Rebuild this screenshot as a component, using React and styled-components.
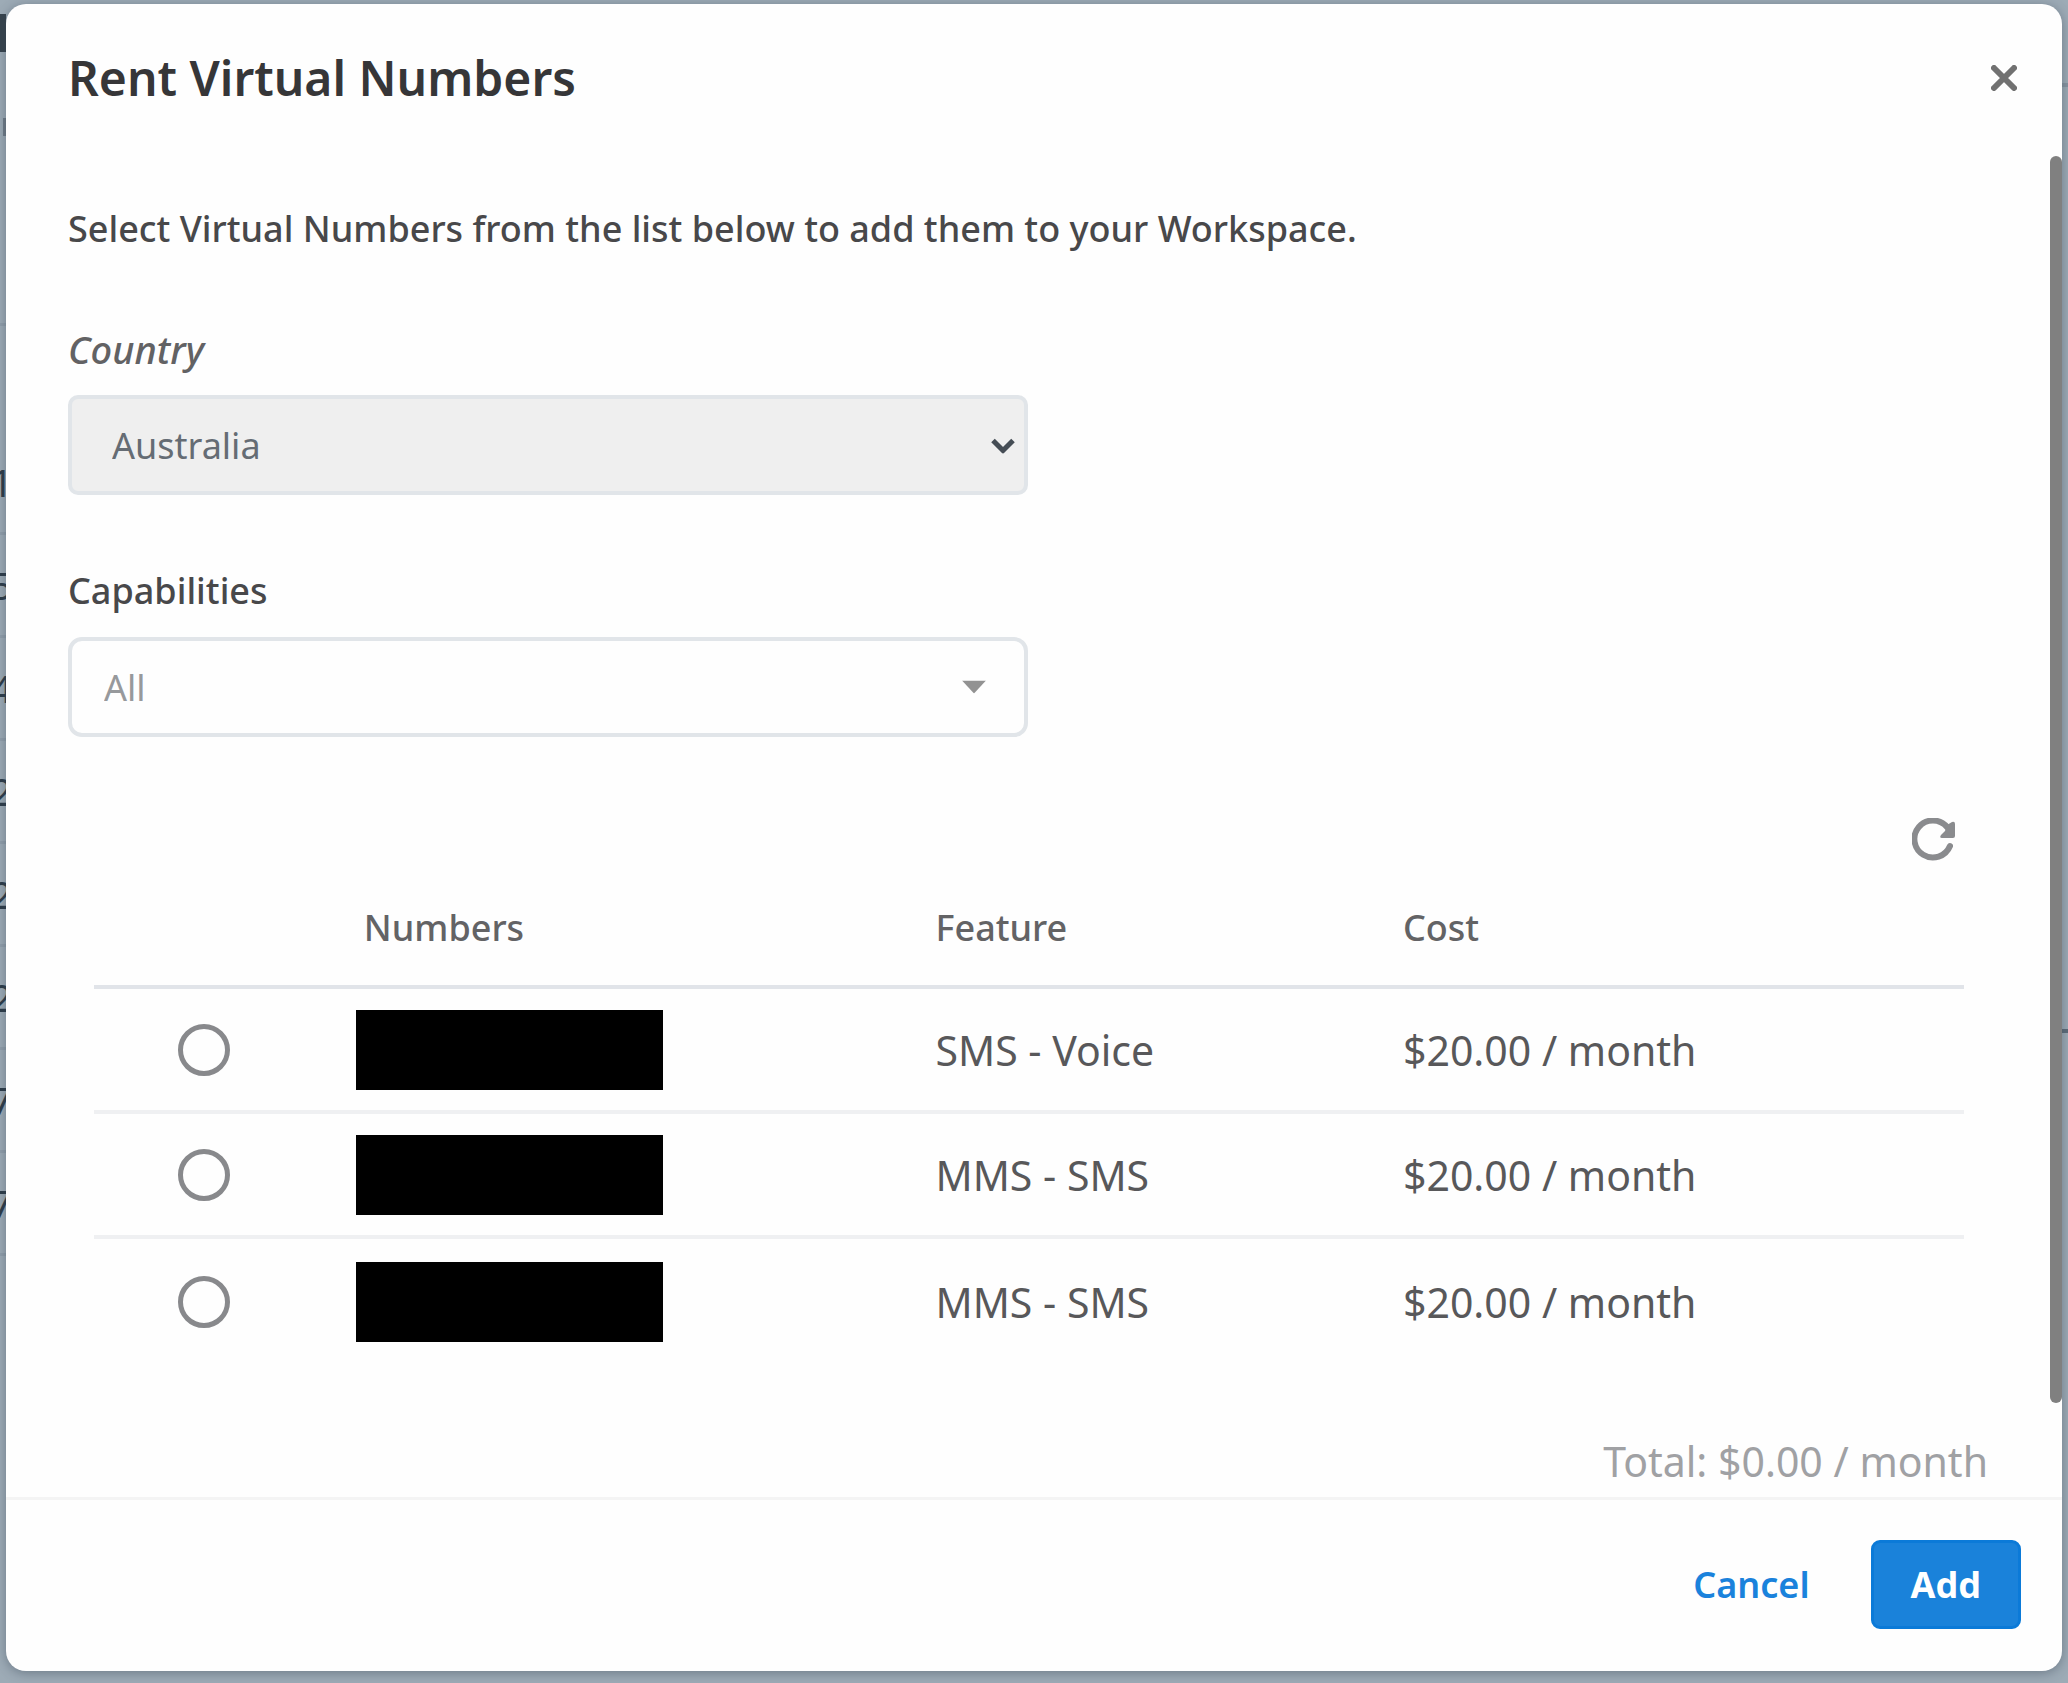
import React, { useState } from "react";
import styled, { createGlobalStyle } from "styled-components";

const GlobalStyle = createGlobalStyle`
  *, *::before, *::after { box-sizing: border-box; }
  body {
    margin: 0;
    background: #9dabb6;
    color: #4a4a4c;
    font-family: "Noto Sans", "Open Sans", sans-serif;
  }
  button, input, select { font: inherit; }
`;

const Screen = styled.div`
  position: relative;
  display: flex;
  min-height: 100vh;
  padding: 4px 6px 12px;
  overflow: hidden;
`;

const Backdrop = styled.div`
  position: absolute;
  inset: 0;
  padding-top: 323px;
  color: #2c3b48;
  font-size: 38px;
  line-height: 100px;
`;

const BackdropHead = styled.div`
  width: 40px;
  height: 109px;
  border-top: 3px solid #919fab;
`;

const BackdropRow = styled.div`
  width: 40px;
  height: 103px;
  border-bottom: 3px solid #919fab;
  text-indent: -9px;
`;

const BackdropMark = styled.span`
  position: absolute;
  top: ${(p) => p.$top}px;
  left: ${(p) => p.$left}px;
  width: 6px;
  height: ${(p) => p.$height}px;
  background: ${(p) => p.$color};
`;

const BackdropRule = styled.span`
  position: absolute;
  top: ${(p) => p.$top}px;
  right: 0;
  width: 8px;
  height: 4px;
  background: ${(p) => p.$color};
`;

const Modal = styled.section`
  position: relative;
  display: flex;
  flex: 1;
  flex-direction: column;
  min-width: 0;
  border-radius: 20px;
  background: #fefefe;
  box-shadow: 0 2px 12px rgba(50, 65, 80, 0.45);
`;

const Header = styled.header`
  display: flex;
  align-items: center;
  justify-content: space-between;
  padding: 42px 39px 46px 62px;
`;

const Title = styled.h1`
  margin: 0;
  color: #363638;
  font-size: 48px;
  font-weight: 600;
  line-height: 64px;
`;

const IconButton = styled.button`
  display: grid;
  place-items: center;
  width: ${(p) => p.$size}px;
  height: ${(p) => p.$size}px;
  padding: 0;
  border: 0;
  background: transparent;
  color: ${(p) => p.$color};
  cursor: pointer;
`;

const Scroller = styled.div`
  display: flex;
  flex: 1;
`;

const Body = styled.div`
  flex: 1;
  min-width: 0;
  padding: 49px 62px 8px 62px;
`;

const ScrollTrack = styled.div`
  width: 12px;
`;

const ScrollThumb = styled.div`
  height: 93%;
  border-radius: 6px;
  background: #808080;
`;

const Intro = styled.p`
  margin: 0;
  color: #48484a;
  font-size: 36px;
  font-weight: 500;
  line-height: 48px;
`;

const Field = styled.div`
  width: 50%;
  max-width: 960px;
  margin-top: 70px;
`;

const Label = styled.label`
  display: block;
  margin-bottom: 20px;
  color: ${(p) => (p.$muted ? "#626264" : "#48484a")};
  font-size: ${(p) => (p.$muted ? 38 : 36)}px;
  font-style: ${(p) => (p.$muted ? "italic" : "normal")};
  font-weight: 500;
  line-height: 52px;
`;

const SelectBox = styled.div`
  position: relative;

  svg {
    position: absolute;
    top: 50%;
    right: ${(p) => (p.$filled ? 13 : 42)}px;
    transform: translateY(-50%);
    pointer-events: none;
  }
`;

const Select = styled.select`
  display: block;
  width: 100%;
  height: 100px;
  padding: 0 64px 0 ${(p) => (p.$filled ? 40 : 32)}px;
  appearance: none;
  border: 4px solid #e1e5e9;
  border-radius: ${(p) => (p.$filled ? 10 : 14)}px;
  background: ${(p) => (p.$filled ? "#efefef" : "#fefefe")};
  color: ${(p) => (p.$filled ? "#656c74" : "#97999c")};
  font-size: 36px;
`;

const Toolbar = styled.div`
  display: flex;
  justify-content: flex-end;
  margin-top: 73px;
  padding-right: 24px;
`;

const Table = styled.table`
  width: calc(100% - 50px);
  margin: 0 24px 0 26px;
  border-collapse: separate;
  border-spacing: 0;
  table-layout: fixed;
`;

const Th = styled.th`
  width: ${(p) => p.$width};
  padding: 32px 0 31px ${(p) => p.$indent || 0}px;
  border-bottom: 4px solid #e1e4e9;
  color: #636365;
  font-size: 36px;
  font-weight: 500;
  line-height: 52px;
  text-align: left;
`;

const Row = styled.tr`
  &:not(:last-child) td {
    border-bottom: 4px solid #eff0f2;
  }
`;

const Td = styled.td`
  height: 125px;
  padding: 0 0 0 ${(p) => p.$indent || 0}px;
  color: #58585a;
  font-size: 41px;
  line-height: 56px;
`;

const Radio = styled.input`
  display: block;
  width: 52px;
  height: 52px;
  margin: 0;
  appearance: none;
  border: 5px solid #88898c;
  border-radius: 50%;
  background: #fefefe;

  &:checked {
    border: 16px solid #1a82dc;
  }
`;

const Redacted = styled.span`
  display: block;
  width: 307px;
  height: 80px;
  background: #000;
`;

const Total = styled.p`
  margin: 69px 0 0;
  color: #a0a1a4;
  font-size: 41px;
  line-height: 56px;
  text-align: right;
`;

const Footer = styled.footer`
  display: flex;
  align-items: center;
  justify-content: flex-end;
  gap: 22px;
  padding: 40px 41px 42px;
  border-top: 3px solid #f4f4f4;
`;

const Button = styled.button`
  height: 89px;
  padding: 0 ${(p) => (p.$primary ? 37 : 36)}px;
  border: 3px solid ${(p) => (p.$primary ? "#0b7ad8" : "transparent")};
  border-radius: 9px;
  background: ${(p) => (p.$primary ? "#1a82da" : "transparent")};
  color: ${(p) => (p.$primary ? "#fff" : "#1a82dc")};
  font-size: 36px;
  font-weight: ${(p) => (p.$primary ? 700 : 600)};
  cursor: pointer;
`;

const CloseIcon = () => (
  <svg width="26" height="26" viewBox="0 0 26 26" aria-hidden="true">
    <path d="M3 3L23 23M23 3L3 23" stroke="currentColor" strokeWidth="6" strokeLinecap="round" />
  </svg>
);

const ChevronIcon = () => (
  <svg width="24" height="17" viewBox="0 0 24 17" aria-hidden="true">
    <path d="M2 4L12 14L22 4" fill="none" stroke="#454d55" strokeWidth="5" />
  </svg>
);

const CaretIcon = () => (
  <svg width="24" height="13" viewBox="0 0 24 13" aria-hidden="true">
    <path d="M0 0H24L12 13Z" fill="#929292" />
  </svg>
);

const RefreshIcon = () => (
  <svg width="44" height="44" viewBox="0 0 44 44" aria-hidden="true">
    <path d="M38 28A18.5 18.5 0 1 1 35 9" fill="none" stroke="currentColor" strokeWidth="6" strokeLinecap="round" />
    <path d="M35 7L40 4Q43 3 43 6V18Q43 20 41 20H30Q27 20 29 17L33 13Z" fill="currentColor" />
  </svg>
);

const numbers = [
  { id: "n1", feature: "SMS - Voice", cost: "$20.00 / month" },
  { id: "n2", feature: "MMS - SMS", cost: "$20.00 / month" },
  { id: "n3", feature: "MMS - SMS", cost: "$20.00 / month" },
];

const backdropDigits = ["1", "5", "4", "2", "2", "2", "7", "7"];

export default function App() {
  const [selected, setSelected] = useState(null);

  return (
    <Screen>
      <GlobalStyle />
      <Backdrop aria-hidden="true">
        <BackdropMark $top={14} $left={0} $height={38} $color="#36424c" />
        <BackdropMark $top={118} $left={3} $height={18} $color="#6f7c88" />
        <BackdropRule $top={83} $color="#8795a1" />
        <BackdropRule $top={1029} $color="#5c6c79" />
        <BackdropHead />
        {backdropDigits.map((digit, index) => (
          <BackdropRow key={index}>{digit}</BackdropRow>
        ))}
      </Backdrop>
      <Modal role="dialog" aria-labelledby="rent-title">
        <Header>
          <Title id="rent-title">Rent Virtual Numbers</Title>
          <IconButton type="button" aria-label="Close" $size={38} $color="#717171">
            <CloseIcon />
          </IconButton>
        </Header>
        <Scroller>
          <Body>
            <Intro>Select Virtual Numbers from the list below to add them to your Workspace.</Intro>
            <Field>
              <Label htmlFor="country" $muted>Country</Label>
              <SelectBox $filled>
                <Select id="country" $filled>
                  <option>Australia</option>
                </Select>
                <ChevronIcon />
              </SelectBox>
            </Field>
            <Field>
              <Label htmlFor="capabilities">Capabilities</Label>
              <SelectBox>
                <Select id="capabilities">
                  <option>All</option>
                </Select>
                <CaretIcon />
              </SelectBox>
            </Field>
            <Toolbar>
              <IconButton type="button" aria-label="Refresh numbers" $size={60} $color="#8a8b8e">
                <RefreshIcon />
              </IconButton>
            </Toolbar>
            <Table>
              <thead>
                <tr>
                  <Th $width="14%" aria-label="Select" />
                  <Th $width="31%" $indent={8}>Numbers</Th>
                  <Th $width="25%">Feature</Th>
                  <Th $width="30%">Cost</Th>
                </tr>
              </thead>
              <tbody>
                {numbers.map((item, index) => (
                  <Row key={item.id}>
                    <Td $indent={84}>
                      <Radio
                        type="radio"
                        name="number"
                        aria-label={`Number ${index + 1}`}
                        checked={selected === item.id}
                        onChange={() => setSelected(item.id)}
                      />
                    </Td>
                    <Td><Redacted /></Td>
                    <Td>{item.feature}</Td>
                    <Td>{item.cost}</Td>
                  </Row>
                ))}
              </tbody>
            </Table>
            <Total>Total: $0.00 / month</Total>
          </Body>
          <ScrollTrack aria-hidden="true">
            <ScrollThumb />
          </ScrollTrack>
        </Scroller>
        <Footer>
          <Button type="button">Cancel</Button>
          <Button type="button" $primary>Add</Button>
        </Footer>
      </Modal>
    </Screen>
  );
}
